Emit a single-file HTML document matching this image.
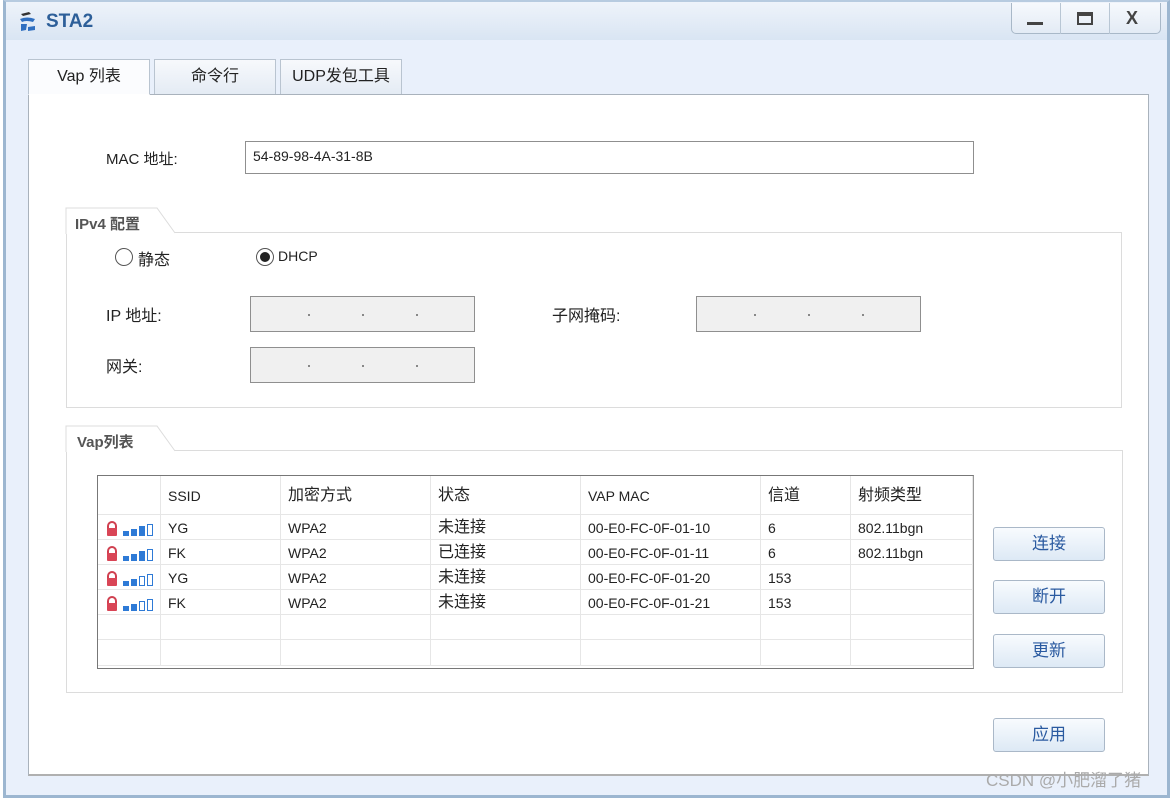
<!DOCTYPE html>
<html><head><meta charset="utf-8"><style>
*{box-sizing:border-box;margin:0;padding:0}
body{width:1173px;height:799px;background:#fff;position:relative;overflow:hidden;font-family:"Liberation Sans","Noto Sans CJK SC",sans-serif;font-size:15px;color:#222}
.a{position:absolute}
#win{left:3px;top:0;width:1167px;height:798px;background:#e9f0fb;border:3px solid #9cb6d0;border-top:2px solid #b7cbe0}
#title{left:6px;top:2px;width:1161px;height:38px;background:linear-gradient(#eef3fa,#d9e5f3)}
.tab{background:linear-gradient(#f7f9fc,#e4ebf4);border:1px solid #b9c4d0;border-bottom:none;text-align:center;line-height:34px;font-size:16px}
#panel{left:28px;top:94px;width:1121px;height:682px;background:#fff;border:1px solid #a9b2bc;border-bottom:2px solid #b0b0b0}
.inp{border:1px solid #8f8f8f;background:#f0f0f0}
.grp{border:1px solid #dcdcdc}
.btn{width:112px;height:34px;border:1px solid #aab8c8;border-radius:3px;background:linear-gradient(#f8fbfe,#dde9f5);color:#2a5aa0;text-align:center;line-height:32px;font-size:17px}
.dot{position:absolute;top:13px;width:2px;height:2px;background:#888}
table{border-collapse:collapse;font-size:14px;table-layout:fixed}
td{border:1px solid #e6e6e6;height:25px;line-height:22px;padding:2px 0 0 7px;white-space:nowrap;overflow:hidden}
.c{font-size:16px}
</style></head><body>
<div id="win" class="a"></div>
<div id="title" class="a"></div>
<svg class="a" style="left:17px;top:10px" width="22" height="24" viewBox="0 0 22 24"><path d="M4 4 L12 2 L14 4 L6 6Z" fill="#333"/><path d="M3 9 Q10 6 18 9 L16 12 Q9 10 5 12Z" fill="#2f6fc0"/><path d="M4 14 L10 14 L9 20 L4 21Z" fill="#2f6fc0"/><path d="M11 17 L18 16 L18 20 L11 21Z" fill="#2f6fc0"/></svg>
<div class="a" style="left:46px;top:11px;font-size:19px;font-weight:bold;color:#2d5f99">STA2</div>
<div class="a" style="left:1011px;top:3px;width:150px;height:31px;border:1px solid #a8b8c8;border-top:none;border-radius:0 0 5px 5px;background:linear-gradient(#f6f9fd,#e3ebf5)"></div>
<div class="a" style="left:1060px;top:3px;width:1px;height:31px;background:#b8c6d4"></div>
<div class="a" style="left:1109px;top:3px;width:1px;height:31px;background:#b8c6d4"></div>
<div class="a" style="left:1027px;top:22px;width:16px;height:3px;background:#444"></div>
<div class="a" style="left:1077px;top:12px;width:16px;height:13px;border:2px solid #444;border-top-width:4px"></div>
<div class="a" style="left:1126px;top:8px;font-size:18px;font-weight:bold;color:#444">X</div>
<div id="panel" class="a"></div>
<div class="a tab" style="left:28px;top:59px;width:122px;height:36px;background:#fbfcfe;border-bottom:1px solid #fff">Vap 列表</div>
<div class="a tab" style="left:154px;top:59px;width:122px;height:35px">命令行</div>
<div class="a tab" style="left:280px;top:59px;width:122px;height:35px">UDP发包工具</div>

<div class="a" style="left:106px;top:148px">MAC 地址:</div>
<div class="a inp" style="left:245px;top:141px;width:729px;height:33px;background:#fff;padding:6px 7px;font-size:14px">54-89-98-4A-31-8B</div>

<div class="a grp" style="left:66px;top:232px;width:1056px;height:176px"></div>
<svg class="a" style="left:65px;top:207px" width="120" height="27"><path d="M1 27 V1 H92 L110 26" fill="#fff" stroke="#dcdcdc"/><rect x="2" y="25" width="106" height="3" fill="#fff"/></svg>
<div class="a" style="left:75px;top:213px;font-weight:bold;color:#555">IPv4 配置</div>
<div class="a" style="left:115px;top:248px;width:18px;height:18px;border:1px solid #555;border-radius:50%"></div>
<div class="a" style="left:138px;top:246px;font-size:16px">静态</div>
<div class="a" style="left:256px;top:248px;width:18px;height:18px;border:1px solid #555;border-radius:50%"><div style="margin:3px;width:10px;height:10px;border-radius:50%;background:#222"></div></div>
<div class="a" style="left:278px;top:248px;font-size:14px">DHCP</div>
<div class="a" style="left:106px;top:302px;font-size:16px">IP 地址:</div>
<div class="a" style="left:552px;top:302px;font-size:16px">子网掩码:</div>
<div class="a" style="left:106px;top:353px;font-size:16px">网关:</div>
<div class="a inp" style="left:250px;top:296px;width:225px;height:36px"><i class="dot" style="left:57px;top:17px"></i><i class="dot" style="left:111px;top:17px"></i><i class="dot" style="left:165px;top:17px"></i></div>
<div class="a inp" style="left:696px;top:296px;width:225px;height:36px"><i class="dot" style="left:57px;top:17px"></i><i class="dot" style="left:111px;top:17px"></i><i class="dot" style="left:165px;top:17px"></i></div>
<div class="a inp" style="left:250px;top:347px;width:225px;height:36px"><i class="dot" style="left:57px;top:17px"></i><i class="dot" style="left:111px;top:17px"></i><i class="dot" style="left:165px;top:17px"></i></div>

<div class="a grp" style="left:66px;top:450px;width:1057px;height:243px"></div>
<svg class="a" style="left:65px;top:425px" width="120" height="27"><path d="M1 27 V1 H92 L110 26" fill="#fff" stroke="#dcdcdc"/><rect x="2" y="25" width="106" height="3" fill="#fff"/></svg>
<div class="a" style="left:77px;top:431px;font-weight:bold;color:#555">Vap列表</div>

<div class="a" style="left:97px;top:475px;width:877px;height:194px;border:1px solid #777;border-right-color:#999;overflow:hidden;background:#fff">
<table style="position:absolute;left:-1px;top:-1px;width:875px">
<colgroup><col style="width:63px"><col style="width:120px"><col style="width:150px"><col style="width:150px"><col style="width:180px"><col style="width:90px"><col style="width:122px"></colgroup>
<tr><td style="height:39px"></td><td>SSID</td><td class="c">加密方式</td><td class="c">状态</td><td>VAP MAC</td><td class="c">信道</td><td class="c">射频类型</td></tr>
<tr><td>SIG3</td><td>YG</td><td>WPA2</td><td class="c">未连接</td><td>00-E0-FC-0F-01-10</td><td>6</td><td>802.11bgn</td></tr>
<tr><td>SIG3</td><td>FK</td><td>WPA2</td><td class="c">已连接</td><td>00-E0-FC-0F-01-11</td><td>6</td><td>802.11bgn</td></tr>
<tr><td>SIG2</td><td>YG</td><td>WPA2</td><td class="c">未连接</td><td>00-E0-FC-0F-01-20</td><td>153</td><td></td></tr>
<tr><td>SIG2</td><td>FK</td><td>WPA2</td><td class="c">未连接</td><td>00-E0-FC-0F-01-21</td><td>153</td><td></td></tr>
<tr><td style="height:24px"></td><td></td><td></td><td></td><td></td><td></td><td></td></tr>
<tr><td style="height:26px"></td><td></td><td></td><td></td><td></td><td></td><td></td></tr>
</table></div>

<div class="a btn" style="left:993px;top:527px">连接</div>
<div class="a btn" style="left:993px;top:580px">断开</div>
<div class="a btn" style="left:993px;top:634px">更新</div>
<div class="a btn" style="left:993px;top:718px">应用</div>
<div class="a" style="left:986px;top:766px;font-size:17px;color:#aaa">CSDN @小肥溜了猪</div>
<script>
document.querySelectorAll('td').forEach(function(t){
 if(t.textContent==='SIG3'||t.textContent==='SIG2'){
  var f=t.textContent==='SIG3'?3:2;var s='<svg width="52" height="16" style="vertical-align:middle;display:block;margin-top:2px"><path d="M1 8 V5 a4 4 0 0 1 8 0 V8" fill="none" stroke="#d04050" stroke-width="2"/><rect x="0" y="7" width="10" height="8" rx="1" fill="#d94556"/>';
  var h=[5,7,10,12];
  for(var i=0;i<4;i++){ if(i<f) s+='<rect x="'+(16+i*8)+'" y="'+(15-h[i])+'" width="6" height="'+h[i]+'" fill="#2e7ad6"/>'; else s+='<rect x="'+(16.5+i*8)+'" y="'+(15.5-h[i])+'" width="5" height="'+(h[i]-1)+'" fill="none" stroke="#2e7ad6"/>';}
  t.style.paddingLeft='9px';t.innerHTML=s+'</svg>';
 }});
</script>
</body></html>
